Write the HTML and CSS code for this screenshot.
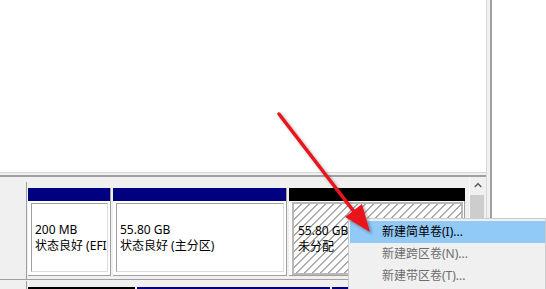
FILE: index.html
```html
<!DOCTYPE html>
<html>
<head>
<meta charset="utf-8">
<link rel="stylesheet" href="styles.css">
</head>
<body>
<div class="app">
  <div class="main">
    <div class="top"></div>
    <div class="split"></div>
    <div class="lower">
      <div class="disks">
        <div class="row">
          <div class="label"></div>
          <div class="parts">
            <div class="cell c1">
              <div class="hdr navy"></div>
              <div class="body"><div class="inner"><span class="ln">200 MB</span><span class="ln">状态良好 (EFI 系统分区)</span></div></div>
            </div>
            <div class="cell c2">
              <div class="hdr navy"></div>
              <div class="body"><div class="inner"><span class="ln">55.80 GB</span><span class="ln">状态良好 (主分区)</span></div></div>
            </div>
            <div class="cell c3 unalloc">
              <div class="hdr black"></div>
              <div class="body"><div class="inner hatch"><span class="ln">55.80 GB</span><span class="ln">未分配</span></div></div>
            </div>
          </div>
        </div>
        <div class="row row2">
          <div class="label"></div>
          <div class="parts">
            <div class="cell r1"><div class="hdr black"></div></div>
            <div class="cell r2"><div class="hdr navy"></div></div>
            <div class="cell r3"><div class="hdr navy"></div></div>
          </div>
        </div>
      </div>
      <div class="scroll">
        <div class="sbtn"><svg width="17" height="17" viewBox="0 0 17 17"><path d="M5 10 L8.5 6.5 L12 10" fill="none" stroke="#606060" stroke-width="1.6"/></svg></div>
        <div class="thumb"></div>
      </div>
    </div>
  </div>
  <div class="gutter"></div>
  <div class="desk"></div>
</div>

<div class="menu">
  <div class="item active">新建简单卷(I)...</div>
  <div class="item disabled">新建跨区卷(N)...</div>
  <div class="item disabled">新建带区卷(T)...</div>
</div>

<svg class="arrow" width="546" height="289" viewBox="0 0 546 289">
  <defs>
    <filter id="sh" x="-20%" y="-20%" width="140%" height="140%">
      <feDropShadow dx="2" dy="2" stdDeviation="1.5" flood-color="#000" flood-opacity="0.35"/>
    </filter>
  </defs>
  <g filter="url(#sh)">
    <line x1="279" y1="114" x2="355" y2="213" stroke="#e8161e" stroke-width="3.5" stroke-linecap="round"/>
    <polygon points="370,232 345,217 362,204" fill="#e8161e"/>
  </g>
</svg>
</body>
</html>
```

FILE: styles.css
```css
html, body {
  margin: 0;
  padding: 0;
}
body {
  width: 546px;
  height: 289px;
  overflow: hidden;
  background: #ffffff;
  font-family: "Noto Sans", "Noto Sans CJK SC", sans-serif;
  font-size: 12px;
  color: #000;
  position: relative;
}
.app {
  display: flex;
  height: 289px;
}
.main {
  width: 487px;
  box-sizing: border-box;
  border-right: 1px solid #d9d9d9;
  background: #f0f0f0;
  display: flex;
  flex-direction: column;
}
.top {
  height: 172px;
  background: #ffffff;
  border-bottom: 1px solid #d9d9d9;
}
.split {
  height: 2px;
}
.lower {
  flex: 1;
  border-top: 2px solid #a0a0a0;
  display: flex;
  overflow: hidden;
}
.gutter {
  width: 3px;
  background: #f0f0f0;
  border-right: 2px solid #a0a0a0;
}
.desk {
  flex: 1;
  background: #ffffff;
}
.disks {
  width: 469px;
  padding-top: 5px;
  box-sizing: border-box;
}
.row {
  display: flex;
  height: 98px;
  box-sizing: border-box;
  border-bottom: 1px solid #a0a0a0;
}
.row2 {
  margin-top: 1px;
  border-bottom: none;
}
.label {
  width: 27px;
  box-sizing: border-box;
  border-right: 1px solid #a0a0a0;
}
.parts {
  display: flex;
  gap: 2px;
  padding: 6px 0 0 1px;
}
.cell {
  display: flex;
  flex-direction: column;
  height: 88px;
  box-sizing: border-box;
}
.c1 { width: 83px; border-right: 1px solid #a0a0a0; }
.c2 { width: 174px; border-right: 1px solid #a0a0a0; }
.c3 { width: 176px; }
.r1 { width: 107px; }
.r2 { width: 193px; }
.r3 { width: 133px; }
.hdr {
  height: 13px;
  flex: none;
}
.navy { background: #000080; }
.black { background: #000000; }
.body {
  flex: 1;
  background: #ffffff;
  border-bottom: 1px solid #a0a0a0;
  padding: 2px 2px 3px 3px;
  display: flex;
  min-height: 0;
}
.inner {
  flex: 1;
  min-width: 0;
  border: 1px solid;
  border-color: #a0a0a0 #dcdcdc #dcdcdc #a0a0a0;
  display: flex;
  flex-direction: column;
  justify-content: center;
  padding-left: 3px;
  overflow: hidden;
}
.ln {
  display: block;
  line-height: 16px;
  white-space: nowrap;
}
.unalloc .body {
  padding: 1px 1px 0 3px;
  border-right: 1px solid #a0a0a0;
}
.hatch {
  border: 2px solid #b9b9b9;
  padding-left: 4px;
  background: repeating-linear-gradient(135deg, #ffffff 0, #ffffff 4.6px, #a8a8a8 4.6px, #a8a8a8 5.66px);
}
.scroll {
  width: 17px;
  border-left: 1px solid #f8f8f8;
  box-sizing: border-box;
  display: flex;
  flex-direction: column;
}
.sbtn {
  height: 17px;
  display: flex;
}
.thumb {
  margin: 1px 2px 0 0;
  width: 14px;
  flex: 1;
  background: #cdcdcd;
}
.menu {
  position: absolute;
  left: 348px;
  top: 218px;
  width: 198px;
  height: 80px;
  box-sizing: border-box;
  background: #f0f0f0;
  border: 1px solid #cccccc;
  padding: 2px 0 0 1px;
}
.item {
  height: 22px;
  line-height: 22px;
  padding-left: 32px;
  white-space: nowrap;
}
.item.active {
  background: #91c9f7;
  color: #000;
}
.item.disabled {
  color: #6d6d6d;
}
.arrow {
  position: absolute;
  left: 0;
  top: 0;
  pointer-events: none;
}
```
